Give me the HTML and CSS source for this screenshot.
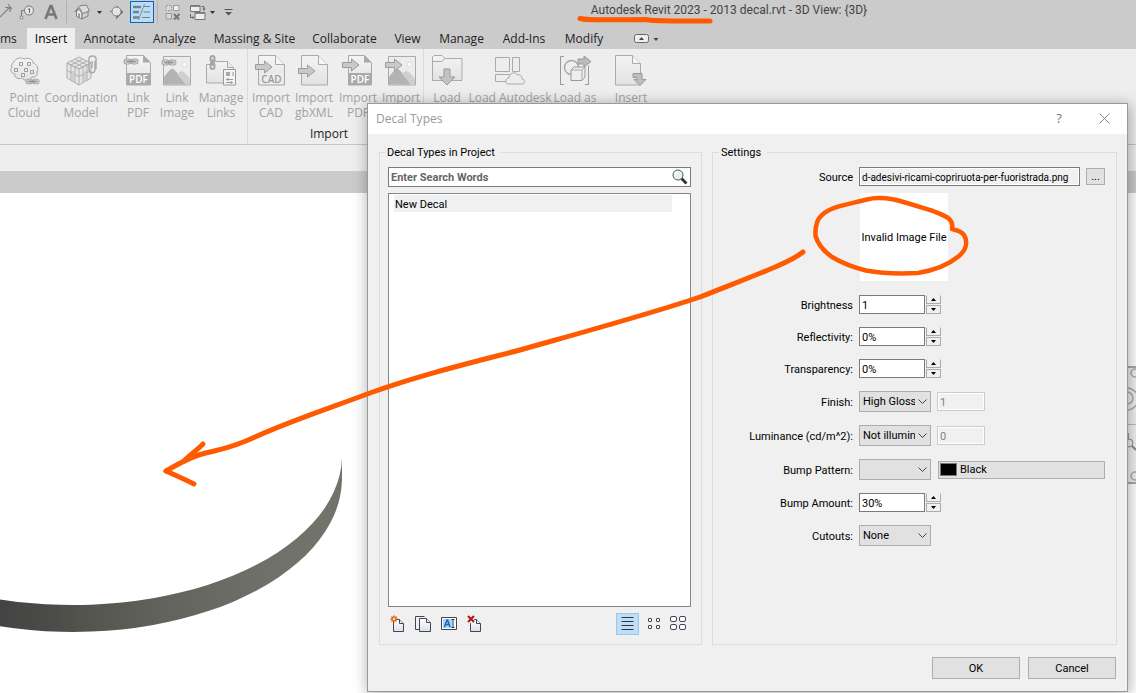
FILE: index.html
```html
<!DOCTYPE html>
<html lang="en">
<head>
<meta charset="utf-8">
<title>Autodesk Revit 2023 - Decal Types</title>
<link rel="stylesheet" href="styles.css">
</head>
<body>
<svg class="defs" aria-hidden="true">
  <defs>
    <linearGradient id="soft" x1="0" y1="0" x2="0" y2="1"><stop offset="0" stop-color="#f4f4f4"/><stop offset="1" stop-color="#e2e2e2"/></linearGradient>
    <linearGradient id="paper" x1="0" y1="0" x2="0" y2="1"><stop offset="0" stop-color="#fff"/><stop offset="1" stop-color="#dcdfe8"/></linearGradient>
    <symbol id="chain" viewBox="0 0 16 7"><g fill="none" stroke="#a3a3a3" stroke-width="3"><rect x="2" y="2" width="5" height="3" rx="1.5"/><rect x="9" y="2" width="5" height="3" rx="1.5"/></g><g fill="none" stroke="#e6e6e6"><rect x="2" y="2" width="5" height="3" rx="1.5"/><rect x="9" y="2" width="5" height="3" rx="1.5"/></g><path d="M4.500 3.500h7" stroke="#969696" stroke-width="2"/></symbol>
    <symbol id="arrow" viewBox="0 0 18 14"><path d="M.5 4.500H9.500V1L17 7l-7.500 6V9.500H.5z" fill="#c9c9c9" stroke="#9c9c9c"/></symbol>
    <symbol id="sheet" viewBox="0 0 28 31"><path d="M.5.5h17l9 9v20.500H.5z" fill="url(#soft)" stroke="#aaa"/><path d="M17.500.5v9h9" fill="#f5f5f5" stroke="#aaa"/></symbol>
    <symbol id="photo" viewBox="0 0 28 30"><path d="M.5.5h27v28.500H.5z" fill="#ececec" stroke="#aaa"/><path d="M1 21c4-5 7-9 9-8 4 2 8 10 13 15.500H1z" fill="#b3b3b3"/><path d="M14 18l4-3c3 0 6 4 9 8v5.500h-4z" fill="#cfcfcf"/><circle cx="21.500" cy="8.500" r="2.500" fill="#fafafa" stroke="#ddd"/></symbol>
  </defs>
</svg>

<div class="app">
  <header class="titlebar">
    <div class="qat" role="toolbar" aria-label="Quick access">
      <button class="qat-btn edge" aria-label="Aligned dimension"><svg width="13" height="20" viewBox="0 0 13 20"><path d="M0 15L9 6M5 5.500h5V10M8 2l4 5" fill="none" stroke="#808080" stroke-width="1.200"/></svg></button>
      <button class="qat-btn" aria-label="Tag by category"><svg width="16" height="16" viewBox="0 0 16 16"><circle cx="10" cy="6.500" r="4.500" fill="#e6e6e6" stroke="#777"/><path d="M9 5.500l1.500-1v4.500" fill="none" stroke="#666"/><path d="M5.500 6.500h-3v6.500" fill="none" stroke="#777"/><circle cx="2.500" cy="13.500" r="1.500" fill="#eee" stroke="#777"/></svg></button>
      <button class="qat-btn" aria-label="Text"><svg width="14" height="16" viewBox="0 0 14 16"><path d="M1.500 15L6.500 2h1L12.500 15M4 10.500h6" fill="none" stroke="#777" stroke-width="2.600"/></svg></button>
      <span class="qat-sep"></span>
      <button class="qat-btn" aria-label="Default 3D view"><svg width="16" height="16" viewBox="0 0 16 16"><path d="M2.500 7v5.500L8 15V9L5 5.500z" fill="#ececec" stroke="#808080"/><path d="M8 9l6-2v5l-6 3z" fill="#cfcfcf" stroke="#808080"/><path d="M.8 8L5.500 2l7-1L15.500 7 8.500 9.500 5.500 4z" fill="#ddd" stroke="#808080"/><path d="M5 9.500v4" stroke="#808080" stroke-width="1.500"/></svg></button>
      <button class="qat-btn" aria-label="3D view options"><svg width="5" height="3" viewBox="0 0 5 3"><path d="M0 0h5L2.500 3z" fill="#333"/></svg></button>
      <button class="qat-btn" aria-label="Section"><svg width="15" height="14" viewBox="0 0 15 14"><path d="M7 1l6 6-6 6z" fill="#777" stroke="#777"/><circle cx="6.500" cy="6.500" r="4.500" fill="#e3e3e3" stroke="#808080"/><path d="M0 6.500h2" stroke="#808080"/><path d="M6.500 11V14" stroke="#808080"/></svg></button>
      <button class="qat-btn active" aria-label="Thin lines" aria-pressed="true"><svg width="20" height="18" viewBox="0 0 20 18"><path d="M1 4h8M1 9h6M1 14.500h6" stroke="#6c8394" stroke-width="2.600"/><path d="M12 3.500h6M11.500 9H18M10 14.500h8" stroke="#6c8394"/><path d="M12.500 1l-6 16" stroke="#7b909f"/></svg></button>
      <span class="qat-sep"></span>
      <button class="qat-btn" aria-label="Close inactive views"><svg width="16" height="17" viewBox="0 0 16 17"><g fill="#d8d8d8" stroke="#999"><path d="M1 1.500h5.500v5H1z" stroke-dasharray="2 1"/><path d="M8.500 1.500H14v5H8.500z" fill="#eee"/><path d="M1 9.500h5.500V15H1z"/></g><path d="M9 10l5 5.500M14.500 10L9 15.500" stroke="#777" stroke-width="2"/></svg></button>
      <button class="qat-btn" aria-label="Switch windows"><svg width="17" height="17" viewBox="0 0 17 17"><path d="M1.500 1.500h9.500v6H1.500z" fill="#eee" stroke="#777"/><path d="M1.500 2.500H11" stroke="#888"/><path d="M6 8.500h10v7H6z" fill="#eee" stroke="#777"/><path d="M6 9.500h10" stroke="#888"/><path d="M12.500 2.500H15v3M1.500 10v3.500H4" fill="none" stroke="#666"/><path d="M13.500 4.500h3L15 7zM3.500 12v3L5.500 13.500z" fill="#666"/></svg></button>
      <button class="qat-btn" aria-label="Window list"><svg width="5" height="3" viewBox="0 0 5 3"><path d="M0 0h5L2.500 3z" fill="#333"/></svg></button>
      <button class="qat-btn" aria-label="Customize toolbar"><svg width="9" height="7" viewBox="0 0 9 7"><path d="M.5.5h8" stroke="#555"/><path d="M1 3h7L4.500 6.500z" fill="#555"/></svg></button>
    </div>
    <h1 class="app-title">Autodesk Revit 2023 - 2013 decal.rvt - 3D View: {3D}</h1>
  </header>

  <nav class="tabs" aria-label="Ribbon tabs">
    <a class="tab clipped" href="#">ms</a>
    <a class="tab current" href="#">Insert</a>
    <a class="tab" href="#">Annotate</a>
    <a class="tab" href="#">Analyze</a>
    <a class="tab" href="#">Massing &amp; Site</a>
    <a class="tab" href="#">Collaborate</a>
    <a class="tab" href="#">View</a>
    <a class="tab" href="#">Manage</a>
    <a class="tab" href="#">Add-Ins</a>
    <a class="tab" href="#">Modify</a>
    <button class="ribbon-toggle" aria-label="Minimize ribbon"><svg width="25" height="9" viewBox="0 0 25 9"><rect x=".5" y=".5" width="14" height="8" rx="2" fill="#eee" stroke="#666"/><path d="M5 6h5L7.500 3z" fill="#444"/><path d="M19.500 4h5L22 7z" fill="#444"/></svg></button>
  </nav>

  <section class="ribbon" aria-label="Insert">
    <div class="panel panel-link">
      <button class="tool" disabled><svg width="32" height="32" viewBox="0 0 32 32"><path d="M6 7c1-4 7-5 10-3 4-2 9 0 9 4 4 1 6 6 4 9 1 3-2 6-5 5-2 4-8 4-10 1-4 2-8-1-7-4-5-1-5-5-3-6-1-3 0-5 2-6z" fill="url(#soft)" stroke="#a5a5a5"/><g fill="#eee" stroke="#999"><path d="M11.500 7.500h3v3h-3zM19.500 7.500h3v3h-3zM6.500 13.500h3v3h-3zM16.500 13.500h3v3h-3zM22.500 15.500h3v3h-3zM13.500 18.500h3v3h-3z"/></g><use href="#chain" x="17" y="23" width="15" height="7"/></svg><span>Point<br>Cloud</span></button>
      <button class="tool" disabled><svg width="34" height="32" viewBox="0 0 34 32"><g fill="#e5e5e5" stroke="#b0b0b0"><path d="M3 8l12-6 12 6v15L15 30 3 23z"/><path d="M3 8l12 6 12-6-12 6z"/><path d="M3 15.500l12 6 12-6"/><path d="M11 12v16M7 10v15.500M23 6l-12 6M19 4L7 10M7 6l12 6M11 4l12 6M15 14v16M19 12v15.500M23 10v15.500" fill="none"/></g><path d="M9 16v10M21 16v10" stroke="#cfcfcf" stroke-width="2"/><path d="M31 6v8c0 5-6 5-6 0V4c0-4 7-4 7 0v10M28 6v7" fill="none" stroke="#aaa" stroke-width="1.500"/></svg><span>Coordination<br>Model</span></button>
      <button class="tool" disabled><svg width="32" height="32" viewBox="0 0 32 32"><path d="M4.500.5h17l7 7V30h-24z" fill="url(#soft)" stroke="#aaa"/><path d="M21 .5v7h7.500z" fill="#aaa"/><path d="M4 18h25v12H4z" fill="#aaa"/><text x="16.500" y="28" class="icon-text light">PDF</text><use href="#chain" x="1" y="3" width="16" height="7"/></svg><span>Link<br>PDF</span></button>
      <button class="tool" disabled><svg width="32" height="32" viewBox="0 0 32 32"><use href="#photo" x="2" y="1" width="28" height="30"/><use href="#chain" x="0" y="4" width="16" height="7"/></svg><span>Link<br>Image</span></button>
      <button class="tool" disabled><svg width="32" height="32" viewBox="0 0 32 32"><path d="M1.500 9.500h7v-3h14l6 6v15.500h-27z" fill="url(#soft)" stroke="#aaa"/><path d="M22.500 6.500v6h6" fill="#eee" stroke="#aaa"/><g fill="none" stroke="#a5a5a5" stroke-width="2"><rect x="5.500" y="1" width="4" height="6" rx="2"/><rect x="5.500" y="8" width="4" height="6" rx="2"/><path d="M7.500 4v7"/></g><path d="M18.500 14.500h12V30h-12z" fill="#f4f4f4" stroke="#999"/><path d="M21 17h4v4h-4z" fill="#aaa"/><path d="M27 18h2M27 20h2M21 24.500h7M21 27.500h7M23 23v3M26 26v3" stroke="#999"/></svg><span>Manage<br>Links</span></button>
    </div>
    <div class="panel panel-import">
      <button class="tool" disabled><svg width="32" height="32" viewBox="0 0 32 32"><use href="#sheet" x="3" y="0" width="28" height="31"/><use href="#arrow" x="0" y="5" width="18" height="14"/><path d="M5 19h23v10H5z" fill="#ededed"/><text x="16.500" y="28" class="icon-text">CAD</text></svg><span>Import<br>CAD</span></button>
      <button class="tool" disabled><svg width="32" height="32" viewBox="0 0 32 32"><use href="#sheet" x="3" y="0" width="28" height="31"/><use href="#arrow" x="0" y="9" width="18" height="14"/></svg><span>Import<br>gbXML</span></button>
      <button class="tool" disabled><svg width="32" height="32" viewBox="0 0 32 32"><path d="M6.500.5h16l7 7V30h-23z" fill="url(#soft)" stroke="#aaa"/><path d="M22 .5v7h7.500z" fill="#aaa"/><path d="M6 18h24v12H6z" fill="#aaa"/><text x="18" y="28" class="icon-text light">PDF</text><use href="#arrow" x="0" y="3" width="18" height="14"/></svg><span>Import<br>PDF</span></button>
      <button class="tool" disabled><svg width="32" height="32" viewBox="0 0 32 32"><use href="#photo" x="3" y="1" width="28" height="30"/><use href="#arrow" x="0" y="3" width="18" height="14"/></svg><span>Import</span></button>
      <h2 class="panel-name">Import</h2>
    </div>
    <div class="panel panel-load">
      <button class="tool" disabled><svg width="32" height="32" viewBox="0 0 32 32"><path d="M1.500 25.500V2l1.500-1.500h8l3 3h17v22z" fill="url(#soft)" stroke="#aaa"/><path d="M1.500 6.500h9l3.500-3" fill="none" stroke="#aaa"/><path d="M13 14h6v8h5l-8 8-8-8h5z" fill="#c3c3c3" stroke="#999"/></svg><span>Load</span></button>
      <button class="tool" disabled><svg width="32" height="32" viewBox="0 0 32 32"><g fill="#ededed" stroke="#aaa"><path d="M1.500 2.500h14v14h-14zM18.500 2.500h7v14h-7zM1.500 19.500h14v7h-14z"/><path d="M15 29c-5 0-4-6 0-6 0-5 6-7 9-3 3-1 4 2 4 4 4 1 3 5 0 5z"/></g></svg><span>Load Autodesk</span></button>
      <button class="tool" disabled><svg width="32" height="32" viewBox="0 0 32 32"><path d="M5 1.500H1.500v28H5M26 29.500h3.500v-19" fill="none" stroke="#999"/><circle cx="12.500" cy="12.500" r="7" fill="#eee" stroke="#aaa" stroke-width="1.500"/><path d="M12 15l3-3h11v10l-3 3.500H12z" fill="#eee" stroke="#999"/><path d="M12 15h11v10.500M23 15l3-3" fill="none" stroke="#aaa"/><path d="M19 4h6V1l7 5.500-7 5.500V9h-6z" fill="#bbb" stroke="#999"/></svg><span>Load as</span></button>
      <button class="tool" disabled><svg width="32" height="32" viewBox="0 0 32 32"><path d="M.5.5h17l8 8V30H.5z" fill="url(#soft)" stroke="#aaa"/><path d="M17.500.5v8h8" fill="#f5f5f5" stroke="#aaa"/><path d="M18 18.500h9v6h4l-6 6-6-6h3v-2h-4z" fill="#bdbdbd" stroke="#999"/></svg><span>Insert</span></button>
    </div>
  </section>
  <div class="options-bar"></div>
  <div class="view-bar"></div>

  <main class="canvas">
    <svg class="model" width="360" height="480" viewBox="0 193 360 480" role="img" aria-label="Curved wall">
      <defs><linearGradient id="wall" x1="0" x2="342" y1="0" y2="0" gradientUnits="userSpaceOnUse"><stop offset="0" stop-color="#434343"/><stop offset=".16" stop-color="#4c4c4a"/><stop offset=".22" stop-color="#51524c"/><stop offset=".5" stop-color="#63645d"/><stop offset=".8" stop-color="#70716a"/><stop offset="1" stop-color="#73736b"/></linearGradient></defs>
      <path d="M0 599.400A269 150 0 0 0 342 458V480A269 154 0 0 1 0 626.200Z" fill="url(#wall)"/>
    </svg>
    <svg class="navbar" width="30" height="122" viewBox="0 0 30 122" aria-label="Navigation bar"><path d="M0 0h30v118H0z" fill="#f1f1f1"/><path d="M0 1h30M0 117h30" stroke="#aaa" stroke-width="2"/><path d="M0 58.500h30" stroke="#bbb"/><g fill="#eee" stroke="#aaa" stroke-width="1.500"><circle cx="25" cy="7" r="4"/><circle cx="17" cy="33" r="11"/><circle cx="17" cy="32" r="6"/><circle cx="25" cy="110" r="4"/></g><path d="M14 67h5v6h-5z" fill="#8cab86"/><circle cx="19" cy="77" r="4" fill="#eee" stroke="#888"/><path d="M22 80l4 4" stroke="#888" stroke-width="2"/></svg>
  </main>
</div>

<div class="dialog" role="dialog" aria-labelledby="dlg-title">
  <header class="dialog-head">
    <h2 id="dlg-title">Decal Types</h2>
    <button class="head-btn" aria-label="Help">?</button>
    <button class="head-btn" aria-label="Close"><svg width="11" height="11" viewBox="0 0 11 11"><path d="M.5.5l10 10M10.500.5l-10 10" stroke="#888"/></svg></button>
  </header>
  <div class="dialog-body">
    <fieldset class="group types">
      <legend>Decal Types in Project</legend>
      <div class="search">
        <input type="search" placeholder="Enter Search Words" aria-label="Search decals">
        <button aria-label="Search"><svg width="16" height="16" viewBox="0 0 16 16"><path d="M9.500 9.500l5 5" stroke="#333" stroke-width="2.800"/><circle cx="6" cy="6" r="5" fill="#e3f3f6" stroke="#555"/><path d="M3 6c0-2 1-3 3-3" fill="none" stroke="#fff" stroke-width="1.500"/></svg></button>
      </div>
      <ul class="list"><li>New Decal</li></ul>
      <div class="list-tools">
        <button aria-label="Create new decal"><svg width="16" height="18" viewBox="0 0 16 18"><path d="M3.500 4.500h6l4 4v8h-10z" fill="url(#paper)" stroke="#3f4757"/><path d="M9.500 4.500v4h4" fill="#eee" stroke="#3f4757"/><path d="M4 .5v7M.5 4h7M1.500 1.500l5 5M6.500 1.500l-5 5" stroke="#e0501a" stroke-width="1.300"/><circle cx="4" cy="4" r="1.500" fill="#ffe23c"/></svg></button>
        <button aria-label="Duplicate decal"><svg width="17" height="18" viewBox="0 0 17 18"><path d="M4 14.500H.5v-13h9" fill="none" stroke="#3f4757"/><path d="M4.500 3.500h7l4 4v9h-11z" fill="url(#paper)" stroke="#3f4757"/><path d="M11.500 3.500v4h4" fill="#eee" stroke="#3f4757"/></svg></button>
        <button aria-label="Rename decal"><svg width="17" height="18" viewBox="0 0 17 18"><path d="M.5 2.500h15v12H.5z" fill="#fff" stroke="#3f4757"/><path d="M2 4h9v9H2z" fill="#a9d4f5"/><path d="M3.500 12l2.500-7h.6L9 12M4.500 9.500H8" fill="none" stroke="#146bb8" stroke-width="1.500"/><path d="M10.500 4.500h3M10.500 12.500h3M12 5v8" stroke="#333"/></svg></button>
        <button aria-label="Delete decal"><svg width="16" height="18" viewBox="0 0 16 18"><path d="M3.500 4.500h6l4 4v8h-10z" fill="url(#paper)" stroke="#3f4757"/><path d="M9.500 4.500v4h4" fill="#eee" stroke="#3f4757"/><path d="M1.500 1.500l6 6M7.500 1.500l-6 6" stroke="#f0f0f0" stroke-width="3.500"/><path d="M1 1l6 6M7 1L1 7" stroke="#b01515" stroke-width="2"/></svg></button>
        <span class="spacer"></span>
        <button class="view on" aria-label="List view" aria-pressed="true"><svg width="13" height="14" viewBox="0 0 13 14"><path d="M.5.5h12M.5 4.500h12M.5 8.500h12M.5 12.500h12" stroke="#2e3440"/></svg></button>
        <button class="view" aria-label="Small icons"><svg width="13" height="15" viewBox="0 0 13 15"><g fill="#fff" stroke="#3f4450"><rect x=".5" y="1.500" width="3" height="3" rx=".5"/><rect x="8.500" y="1.500" width="3" height="3" rx=".5"/><rect x=".5" y="8.500" width="3" height="3" rx=".5"/><rect x="8.500" y="8.500" width="3" height="3" rx=".5"/></g></svg></button>
        <button class="view" aria-label="Large icons"><svg width="17" height="16" viewBox="0 0 17 16"><g fill="#fff" stroke="#3f4450"><rect x=".5" y=".5" width="6" height="5" rx="1.500"/><rect x="9.500" y=".5" width="6" height="5" rx="1.500"/><rect x=".5" y="8.500" width="6" height="5" rx="1.500"/><rect x="9.500" y="8.500" width="6" height="5" rx="1.500"/></g></svg></button>
      </div>
    </fieldset>

    <fieldset class="group settings">
      <legend>Settings</legend>
      <div class="row source-row">
        <label for="source">Source</label>
        <input id="source" class="box" type="text" readonly value="d-adesivi-ricami-copriruota-per-fuoristrada.png">
        <button class="browse" aria-label="Browse">...</button>
      </div>
      <div class="row preview-row"><div class="preview">Invalid Image File</div></div>
      <div class="row">
        <label for="brightness">Brightness</label>
        <span class="spin"><input id="brightness" class="box" type="text" value="1"><span class="steps"><button aria-label="Increase brightness"><svg width="5" height="3"><path d="M0 3h5L2.500 0z"/></svg></button><button aria-label="Decrease brightness"><svg width="5" height="3"><path d="M0 0h5L2.500 3z"/></svg></button></span></span>
      </div>
      <div class="row">
        <label for="reflect">Reflectivity:</label>
        <span class="spin"><input id="reflect" class="box" type="text" value="0%"><span class="steps"><button aria-label="Increase reflectivity"><svg width="5" height="3"><path d="M0 3h5L2.500 0z"/></svg></button><button aria-label="Decrease reflectivity"><svg width="5" height="3"><path d="M0 0h5L2.500 3z"/></svg></button></span></span>
      </div>
      <div class="row">
        <label for="transp">Transparency:</label>
        <span class="spin"><input id="transp" class="box" type="text" value="0%"><span class="steps"><button aria-label="Increase transparency"><svg width="5" height="3"><path d="M0 3h5L2.500 0z"/></svg></button><button aria-label="Decrease transparency"><svg width="5" height="3"><path d="M0 0h5L2.500 3z"/></svg></button></span></span>
      </div>
      <div class="row">
        <label for="finish">Finish:</label>
        <span class="pick"><select id="finish"><option>High Gloss</option></select><svg width="9" height="6" viewBox="0 0 9 6"><path d="M.5.5l4 4 4-4" fill="none" stroke="#444"/></svg></span>
        <input class="box extra" type="text" value="1" disabled aria-label="Finish value">
      </div>
      <div class="row">
        <label for="lum">Luminance (cd/m^2):</label>
        <span class="pick"><select id="lum"><option>Not illumin</option></select><svg width="9" height="6" viewBox="0 0 9 6"><path d="M.5.5l4 4 4-4" fill="none" stroke="#444"/></svg></span>
        <input class="box extra" type="text" value="0" disabled aria-label="Luminance value">
      </div>
      <div class="row">
        <label for="bump">Bump Pattern:</label>
        <span class="pick"><select id="bump"><option></option></select><svg width="9" height="6" viewBox="0 0 9 6"><path d="M.5.5l4 4 4-4" fill="none" stroke="#444"/></svg></span>
        <button class="colour"><span class="swatch"></span>Black</button>
      </div>
      <div class="row">
        <label for="amount">Bump Amount:</label>
        <span class="spin"><input id="amount" class="box" type="text" value="30%"><span class="steps"><button aria-label="Increase bump amount"><svg width="5" height="3"><path d="M0 3h5L2.500 0z"/></svg></button><button aria-label="Decrease bump amount"><svg width="5" height="3"><path d="M0 0h5L2.500 3z"/></svg></button></span></span>
      </div>
      <div class="row">
        <label for="cutouts">Cutouts:</label>
        <span class="pick"><select id="cutouts"><option>None</option></select><svg width="9" height="6" viewBox="0 0 9 6"><path d="M.5.5l4 4 4-4" fill="none" stroke="#444"/></svg></span>
      </div>
    </fieldset>
  </div>
  <footer class="dialog-foot">
    <button>OK</button>
    <button>Cancel</button>
  </footer>
</div>

<svg class="markup" width="1136" height="693" viewBox="0 0 1136 693" aria-hidden="true">
  <g fill="none" stroke="#ff5a00" stroke-width="5" stroke-linecap="round" stroke-linejoin="round">
    <path d="M580 18.500C590 21 620 19.500 645 19.500C655 21.500 680 21 710 21"/>
    <path d="M952 229C954 218 945 216 933 211C920 207 908 203 894 199.500C882 197.500 874 197.500 867 199.500C850 204 832 206 822 215C816 220 815 227 815.500 236C818 244 822 250 832 257C842 263 852 267 866 270.500C885 274 900 274 918 273C933 270.500 947 266 959 256C968 248 967 240 964 235C961 231 957 230 952 229" stroke-width="4.500"/>
    <path d="M803 252C790 263 750 277 700 297C650 314 580 333 520 350C470 363 420 375 370 393C330 408 290 421 255 437C230 449 220 449 202 454C190 457 178 464 166 471"/>
    <path d="M203 444C197 450 189 456 184 461M166 471C175 475 186 480 194 484"/>
  </g>
</svg>
</body>
</html>
```

FILE: styles.css
```css
* { box-sizing: border-box; }
body { margin: 0; font: 12px/15px "Open Sans", "Noto Sans", sans-serif; color: #333; background: #fff; overflow: hidden; }
button, input, select { font: inherit; color: inherit; margin: 0; padding: 0; border-radius: 0; }
button { border: 0; background: none; }
h1, h2 { margin: 0; font-weight: 400; font-size: inherit; }
svg { display: block; flex: none; }
.defs { position: absolute; width: 0; height: 0; }

.app { min-height: 100vh; display: flex; flex-direction: column; }
.titlebar { display: flex; height: 28px; background: #cbcbcb; }
.qat { display: grid; grid-template-columns: 14px 26px 21px 10px 22px 12px 25px 24px 7px 24px 24px 7px 24px; height: 24px; }
.qat-btn { display: flex; align-items: center; justify-content: center; }
.qat-btn.edge { justify-content: flex-start; }
.qat-btn.active { height: 22px; margin-top: 1px; border: 1px solid #0a64c0; background: #bcdcf4; }
.qat-sep { width: 1px; height: 22px; margin: 1px auto 0; background: #b0b0b0; }
.app-title { flex: 1; padding: 3px 0 0 82px; text-align: center; white-space: nowrap; color: #444; font-family: Roboto, "Liberation Sans", sans-serif; }

.tabs { display: grid; grid-template-columns: 27px 48px 69px 61px 99px 81px 45px 63px 62px 58px 1fr; height: 21px; background: #cbcbcb; }
.tab { display: flex; align-items: center; justify-content: center; padding-bottom: 1px; color: #222; text-decoration: none; white-space: nowrap; }
.tab.clipped { justify-content: flex-start; }
.tab.current { background: #eee; color: #000; }
.ribbon-toggle { display: flex; align-items: center; padding-left: 21px; }

.ribbon { display: flex; height: 96px; background: #eee; border-bottom: 1px solid #c4c4c4; }
.panel { display: grid; align-content: start; padding-top: 6px; }
.panel-link { grid-template-columns: 42px 72px 42px 36px 52px; padding-left: 3px; border-right: 1px solid #dadada; }
.panel-import { grid-template-columns: 42px 44px 44px 42px; padding-left: 2px; padding-right: 1px; border-right: 1px solid #dadada; }
.panel-load { grid-template-columns: 46px 80px 50px 62px; }
.tool { display: flex; flex-direction: column; align-items: center; gap: 3px; color: #a3a3a3; white-space: nowrap; text-align: center; }
.panel-name { grid-column: 1 / -1; padding: 6px 14px 0 0; text-align: center; color: #222; }
.icon-text { font: 600 10px "Open Sans", sans-serif; text-anchor: middle; fill: #999; }
.icon-text.light { fill: #fff; }
.options-bar { height: 26px; background: #eee; }
.view-bar { height: 22px; background: #cbcbcb; }
.canvas { flex: 1; position: relative; }
.navbar { position: absolute; top: 173px; right: -4px; }

.dialog { position: absolute; top: 103px; left: 367px; right: 8px; background: #f0f0f0; border: 1px solid #999; box-shadow: 1px 2px 14px rgba(0, 0, 0, .35); font: 11px/14px Roboto, "Liberation Sans", sans-serif; color: #000; }
.dialog-head { display: flex; align-items: center; height: 30px; padding: 0 8px 2px; background: #fff; color: #999; font: 12px/15px "Open Sans", "Noto Sans", sans-serif; }
.dialog-head h2 { flex: 1; }
.head-btn { display: grid; place-items: center; width: 30px; height: 28px; margin-left: 15px; color: #777; font-size: 13px; }
.dialog-body { display: grid; grid-template-columns: 323fr 405fr; gap: 10px; padding: 11px 10px 0 11px; }
.group { display: flex; flex-direction: column; min-width: 0; margin: 0; border: 1px solid #dcdcdc; padding: 7px 10px 8px; }
.group legend { padding: 1px 6px 0 2px; margin-left: -4px; }

.types { padding-left: 9px; }
.search { display: flex; align-items: center; height: 20px; margin: 0 0 6px -1px; border: 1px solid #7a7a7a; background: #fff; }
.search input { flex: 1; min-width: 0; height: 18px; padding: 0 2px; border: 0; outline: 0; background: none; appearance: none; }
.search input::placeholder { color: #666; font-weight: 700; opacity: 1; }
.search button { display: grid; justify-content: end; width: 20px; padding-right: 2px; }
.list { flex: 1; margin: 0 0 0 -1px; padding: 1px 18px 0 5px; border: 1px solid #828790; background: #fff; list-style: none; }
.list li { height: 17px; padding: 3px 1px 0; background: #f0f0f0; }
.list-tools { display: flex; align-items: center; height: 22px; margin: 6px 0 1px; padding: 0 4px 0 1px; gap: 9px; }
.list-tools button { display: grid; place-items: center; }
.list-tools .spacer { flex: 1; }
.list-tools .view.on { width: 23px; height: 22px; background: #c1def4; border: 1px solid #90c8f6; }

.settings { padding-bottom: 98px; padding-right: 11px; gap: 13px; }
.row { display: grid; grid-template-columns: 130px 72px minmax(0, 1fr); column-gap: 6px; align-items: center; }
.row label { padding-top: 2px; text-align: right; white-space: nowrap; }
.source-row { grid-template-columns: 130px minmax(0, 1fr) 19px; }
.preview-row { margin: -6px 0 1px; }
.preview { grid-column: 2 / 4; display: grid; place-items: center; width: 88px; height: 88px; margin-left: 1px; padding-top: 1px; background: #fff; white-space: nowrap; }
.box { width: 100%; height: 19px; padding: 1px 2px 0; border: 1px solid #7a7a7a; background: #fff; outline: 0; }
#source { background: #f0f0f0; font-size: 10px; box-shadow: inset 0 0 0 1px #fff; }
.browse { height: 17px; border: 1px solid #adadad; background: #e1e1e1; line-height: 15px; }
.spin { display: flex; gap: 1px; width: 83px; }
.spin .box { width: 66px; }
.steps { display: grid; grid-template-rows: 9px 9px; width: 15px; gap: 1px; }
.steps button { display: grid; place-items: center; border: 1px solid #adadad; background: #f0f0f0; }
.steps button:first-child { border-top-color: #f0f0f0; }
.pick { display: grid; align-items: center; }
.pick > * { grid-area: 1 / 1; }
.pick select { width: 100%; height: 21px; padding: 1px 15px 0 3px; border: 1px solid #adadad; background: #e1e1e1; appearance: none; outline: 0; }
.pick svg { justify-self: end; margin-right: 4px; pointer-events: none; }
.box.extra { width: 48px; border-color: #ccc; background: #f0f0f0; color: #838383; box-shadow: inset 0 0 0 1px #fff; }
.colour { display: flex; align-items: center; gap: 3px; height: 18px; margin-left: 1px; border: 1px solid #adadad; background: #e1e1e1; padding-left: 1px; }
.swatch { width: 17px; height: 13px; border: 1px solid #777; background: #000; }

.dialog-foot { display: flex; justify-content: flex-end; gap: 8px; padding: 12px 11px; }
.dialog-foot button { width: 88px; height: 22px; padding-top: 1px; border: 1px solid #adadad; background: #e1e1e1; }

.markup { position: absolute; top: 0; left: 0; pointer-events: none; }
```
